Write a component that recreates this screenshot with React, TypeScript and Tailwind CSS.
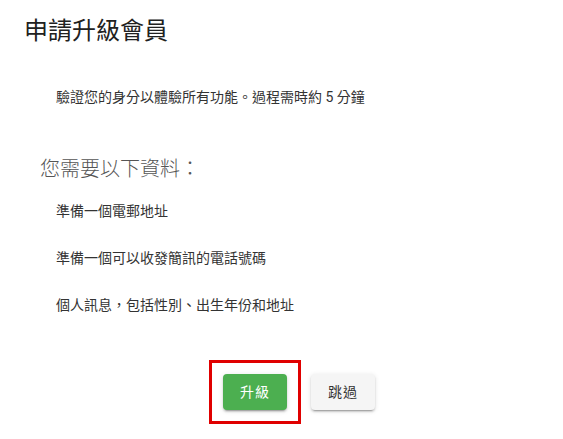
import React from "react";

const font = { fontFamily: 'Roboto, "Noto Sans CJK TC", sans-serif' };

const items = [
  "準備一個電郵地址",
  "準備一個可以收發簡訊的電話號碼",
  "個人訊息，包括性別、出生年份和地址",
];

export default function App() {
  return (
    <div
      className="min-h-[439px] w-[563px] bg-white pt-[15px] text-[#212121]"
      style={font}
    >
      <h1 className="pl-[24px] text-[24px] leading-[32px] font-normal text-[#212121]">
        申請升級會員
      </h1>

      <p className="mt-[40px] pl-[56px] text-[14px] leading-[20px] text-[#333333]">
        驗證您的身分以體驗所有功能。過程需時約 5 分鐘
      </p>

      <h2 className="mt-[48px] pl-[40px] text-[20px] leading-[28px] font-light text-[#555555]">
        您需要以下資料：
      </h2>

      <ul className="mt-[18px] flex flex-col gap-[27px] pl-[56px]">
        {items.map((t) => (
          <li key={t} className="text-[14px] leading-[20px] text-[#333333]">
            {t}
          </li>
        ))}
      </ul>

      <div className="mt-[59px] flex gap-[24px] pl-[223px]">
        <div className="relative">
          <button className="h-[36px] min-w-[64px] rounded-[4px] bg-[#4caf50] px-[16px] text-[14px] font-normal tracking-[1px] text-white shadow-[0_3px_1px_-2px_rgba(0,0,0,0.2),0_2px_2px_0_rgba(0,0,0,0.14),0_1px_5px_0_rgba(0,0,0,0.12)]">
            升級
          </button>
          <span className="pointer-events-none absolute -inset-[14px] border-[3px] border-[#e00000]" />
        </div>
        <button className="h-[36px] min-w-[64px] rounded-[4px] bg-[#f5f5f5] px-[16px] text-[14px] font-normal tracking-[1px] text-[#333333] shadow-[0_3px_1px_-2px_rgba(0,0,0,0.2),0_2px_2px_0_rgba(0,0,0,0.14),0_1px_5px_0_rgba(0,0,0,0.12)]">
          跳過
        </button>
      </div>
    </div>
  );
}
